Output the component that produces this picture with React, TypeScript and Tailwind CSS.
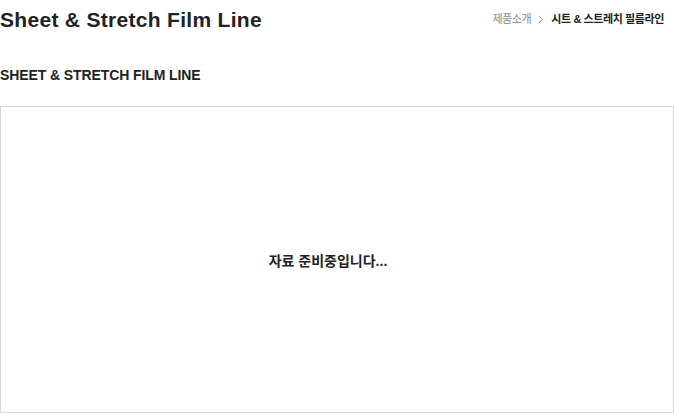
const App = () => {
  return (
    <div className="w-[674px] h-[413px] bg-white overflow-hidden font-['Liberation_Sans','Noto_Sans_CJK_KR',sans-serif] text-[#222]">
      <div className="flex items-center justify-between h-[38px]">
        <h1 className="text-[21px] font-bold leading-none tracking-[0.3px]">Sheet &amp; Stretch Film Line</h1>
        <div className="flex items-center gap-[7px] pr-[10px] text-[11px] tracking-[-0.4px]">
          <span className="text-[#888]">제품소개</span>
          <svg width="6" height="9" viewBox="0 0 6 9">
            <path d="M1 1l3.5 3.5L1 8" fill="none" stroke="#999" strokeWidth="1" />
          </svg>
          <span className="font-bold text-[#222]">시트 &amp; 스트레치 필름라인</span>
        </div>
      </div>
      <h2 className="mt-[28px] text-[14px] font-bold leading-[18px] tracking-[-0.1px]">SHEET &amp; STRETCH FILM LINE</h2>
      <div className="mt-[22px] h-[307px] border border-[#d6d6d6] flex items-center justify-center pr-[18px]">
        <p className="text-[14px] font-bold mt-[4px]">자료 준비중입니다...</p>
      </div>
    </div>
  );
};

export default App;
